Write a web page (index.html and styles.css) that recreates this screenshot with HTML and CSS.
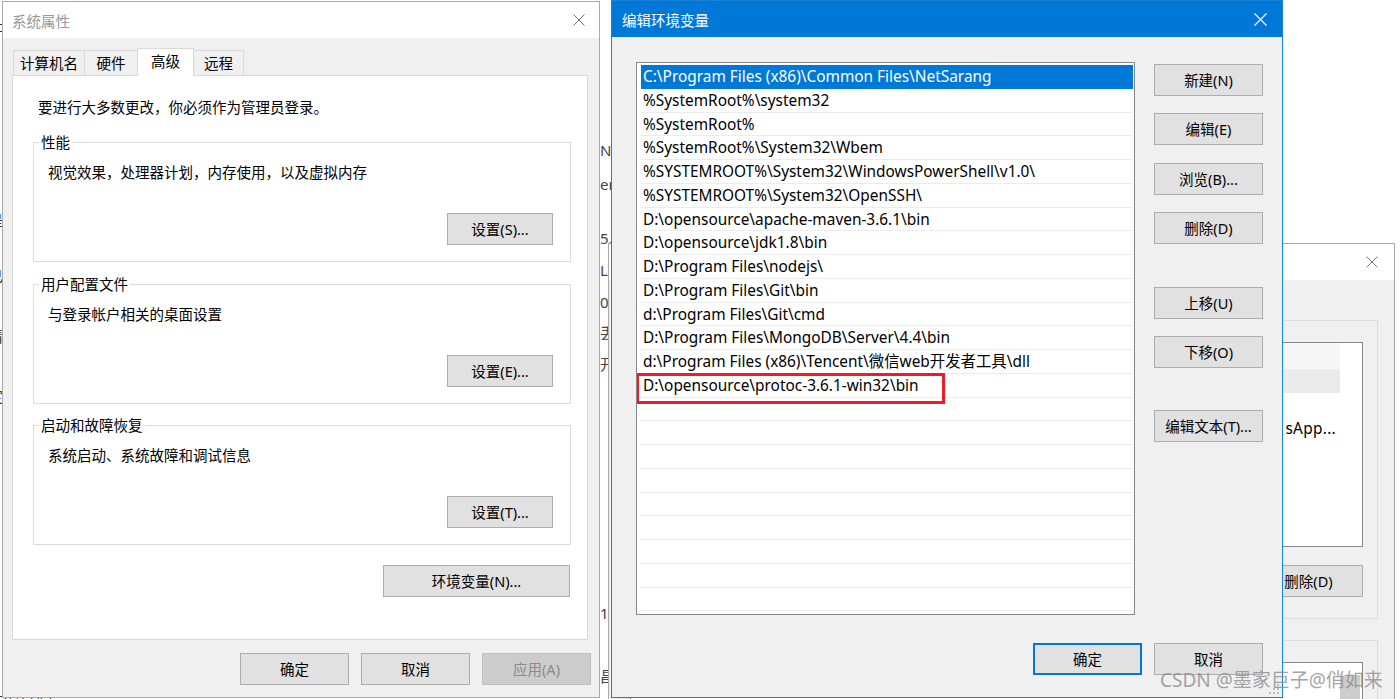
FILE: index.html
```html
<!DOCTYPE html>
<html lang="zh-CN">
<head>
<meta charset="utf-8">
<title>编辑环境变量</title>
<link rel="stylesheet" href="styles.css">
</head>
<body>
<div class="desktop">

  <div class="frag-left">
    <div class="fl fl-a">址</div>
    <div class="fl fl-b">是</div>
    <div class="fl fl-c">己</div>
    <div class="fl fl-d">请</div>
    <div class="fl fl-e">定</div>
  </div>

  <div class="frag-mid">
    <div class="fm fm-1">NMI</div>
    <div class="fm fm-2">er</div>
    <div class="fm fm-3">5.</div>
    <div class="fm fm-4">L</div>
    <div class="fm fm-5">0</div>
    <div class="fm fm-6">丢</div>
    <div class="fm fm-7">开</div>
    <div class="fm fm-8">1</div>
    <div class="fm fm-9">昌</div>
  </div>

  <div class="frag-bottom">引计列表</div>

  <!-- background window: 环境变量 -->
  <div class="win win-back">
    <div class="titlebar">
      <span class="title"></span>
      <svg class="x" width="12" height="12" viewBox="0 0 12 12"><path d="M0.5 0.5L11.5 11.5M11.5 0.5L0.5 11.5" stroke="#7a7a7a" stroke-width="1"/></svg>
    </div>
    <div class="back-body">
      <div class="back-group">
        <div class="back-list">
          <div class="bl-row bl-head"></div>
          <div class="bl-row bl-sel"></div>
          <div class="bl-row"></div>
          <div class="bl-row bl-text"><span>sApp...</span></div>
        </div>
        <div class="back-actions">
          <button class="btn">删除(D)</button>
        </div>
      </div>
      <div class="back-group back-group2">
        <div class="back-list2">
          <div class="scroll-thumb"></div>
        </div>
      </div>
    </div>
  </div>

  <!-- 系统属性 -->
  <div class="win win-sys">
    <div class="titlebar">
      <span class="title">系统属性</span>
      <svg class="x" width="12" height="12" viewBox="0 0 12 12"><path d="M0.5 0.5L11.5 11.5M11.5 0.5L0.5 11.5" stroke="#6f6f6f" stroke-width="1"/></svg>
    </div>
    <div class="sys-body">
      <div class="tabs">
        <div class="tab tab-1">计算机名</div>
        <div class="tab tab-2">硬件</div>
        <div class="tab tab-3 active">高级</div>
        <div class="tab tab-4">远程</div>
      </div>
      <div class="tabpanel">
        <p class="note">要进行大多数更改，你必须作为管理员登录。</p>
        <fieldset class="group">
          <legend>性能</legend>
          <p class="desc">视觉效果，处理器计划，内存使用，以及虚拟内存</p>
          <div class="row-end"><button class="btn btn-set">设置(S)...</button></div>
        </fieldset>
        <fieldset class="group group-2">
          <legend>用户配置文件</legend>
          <p class="desc">与登录帐户相关的桌面设置</p>
          <div class="row-end"><button class="btn btn-set">设置(E)...</button></div>
        </fieldset>
        <fieldset class="group group-3">
          <legend>启动和故障恢复</legend>
          <p class="desc">系统启动、系统故障和调试信息</p>
          <div class="row-end"><button class="btn btn-set">设置(T)...</button></div>
        </fieldset>
        <div class="row-end env-row"><button class="btn btn-env">环境变量(N)...</button></div>
      </div>
      <div class="dialog-buttons">
        <button class="btn">确定</button>
        <button class="btn">取消</button>
        <button class="btn" disabled>应用(A)</button>
      </div>
    </div>
  </div>

  <!-- 编辑环境变量 -->
  <div class="win win-env">
    <div class="titlebar">
      <span class="title">编辑环境变量</span>
      <svg class="x" width="13" height="13" viewBox="0 0 13 13"><path d="M0.5 0.5L12.5 12.5M12.5 0.5L0.5 12.5" stroke="#ffffff" stroke-width="1.2"/></svg>
    </div>
    <div class="env-body">
      <div class="env-list">
        <div class="item selected">C:\Program Files (x86)\Common Files\NetSarang</div>
        <div class="item">%SystemRoot%\system32</div>
        <div class="item">%SystemRoot%</div>
        <div class="item">%SystemRoot%\System32\Wbem</div>
        <div class="item">%SYSTEMROOT%\System32\WindowsPowerShell\v1.0\</div>
        <div class="item">%SYSTEMROOT%\System32\OpenSSH\</div>
        <div class="item">D:\opensource\apache-maven-3.6.1\bin</div>
        <div class="item">D:\opensource\jdk1.8\bin</div>
        <div class="item">D:\Program Files\nodejs\</div>
        <div class="item">D:\Program Files\Git\bin</div>
        <div class="item">d:\Program Files\Git\cmd</div>
        <div class="item">D:\Program Files\MongoDB\Server\4.4\bin</div>
        <div class="item">d:\Program Files (x86)\Tencent\微信web开发者工具\dll</div>
        <div class="item">D:\opensource\protoc-3.6.1-win32\bin</div>
        <div class="item"></div>
        <div class="item"></div>
        <div class="item"></div>
        <div class="item"></div>
        <div class="item"></div>
        <div class="item"></div>
        <div class="item"></div>
        <div class="item"></div>
        <div class="item"></div>
        <div class="item"></div>
        <div class="highlight-box"></div>
      </div>
      <div class="env-actions">
        <button class="btn">新建(N)</button>
        <button class="btn gap-17">编辑(E)</button>
        <button class="btn gap-18">浏览(B)...</button>
        <button class="btn gap-17">删除(D)</button>
        <button class="btn gap-43">上移(U)</button>
        <button class="btn gap-17">下移(O)</button>
        <button class="btn gap-42">编辑文本(T)...</button>
      </div>
      <div class="env-footer">
        <button class="btn default">确定</button>
        <button class="btn">取消</button>
      </div>
    </div>
    <svg class="grip" width="11" height="11" viewBox="0 0 11 11">
      <rect x="8" y="0" width="2" height="2" fill="#bcbcbc"/>
      <rect x="4" y="4" width="2" height="2" fill="#bcbcbc"/>
      <rect x="8" y="4" width="2" height="2" fill="#bcbcbc"/>
      <rect x="0" y="8" width="2" height="2" fill="#bcbcbc"/>
      <rect x="4" y="8" width="2" height="2" fill="#bcbcbc"/>
      <rect x="8" y="8" width="2" height="2" fill="#bcbcbc"/>
    </svg>
  </div>

  <div class="watermark">CSDN @墨家巨子@俏如来</div>
</div>
</body>
</html>
```

FILE: styles.css
```css
* { box-sizing: border-box; }
html, body { margin: 0; padding: 0; }
body {
  width: 1400px;
  height: 699px;
  overflow: hidden;
  background: #ffffff;
  font-family: "Noto Sans", "Noto Sans CJK SC", sans-serif;
  font-size: 14.5px;
  color: #000;
}
.desktop {
  position: relative;
  width: 1400px;
  height: 699px;
  overflow: hidden;
  background: #ffffff;
}
p { margin: 0; }
button { font: inherit; color: #000; }

/* ---------- generic button ---------- */
.btn {
  flex: none;
  width: 109px;
  height: 32px;
  padding: 0;
  background: #e1e1e1;
  border: 1px solid #adadad;
  border-radius: 0;
  line-height: 28px;
  text-align: center;
  white-space: nowrap;
  overflow: hidden;
}
.btn.default { border: 2px solid #0078d7; }
.btn:disabled { background: #cccccc; border-color: #bfbfbf; color: #8a8a8a; }

/* ---------- generic window ---------- */
.win {
  position: absolute;
  display: flex;
  flex-direction: column;
  background: #f0f0f0;
}
.titlebar {
  flex: none;
  display: flex;
  align-items: center;
  justify-content: space-between;
}
.titlebar .x { display: block; flex: none; }

/* ---------- background fragments ---------- */
.frag-left {
  position: absolute;
  left: -12px;
  top: 0;
  width: 16px;
  display: flex;
  flex-direction: column;
  color: #333;
  font-size: 15px;
  line-height: 20px;
  z-index: 1;
}
.fl-a { margin-top: 15px; }
.fl-b { margin-top: 175px; }
.fl-c { margin-top: 36px; }
.fl-d { margin-top: 40px; }
.fl-e { margin-top: 40px; }

.frag-mid {
  position: absolute;
  left: 600px;
  top: 140px;
  width: 30px;
  display: flex;
  flex-direction: column;
  color: #444;
  font-size: 15px;
  line-height: 20px;
  white-space: nowrap;
  z-index: 1;
}
.fm-2 { margin-top: 14px; }
.fm-3 { margin-top: 34px; }
.fm-4 { margin-top: 12px; }
.fm-5 { margin-top: 12px; }
.fm-6 { margin-top: 11px; }
.fm-7 { margin-top: 11px; }
.fm-8 { margin-top: 229px; }
.fm-9 { margin-top: 43px; }

.frag-bottom {
  position: absolute;
  left: -2px;
  top: 692px;
  font-size: 15px;
  line-height: 20px;
  color: #333;
  z-index: 1;
}

/* ---------- background window (环境变量) ---------- */
.win-back {
  left: 608px;
  top: 243px;
  width: 787px;
  height: 470px;
  border: 1px solid #a8a8a8;
  z-index: 2;
}
.win-back .titlebar {
  height: 36px;
  background: #fff;
  padding: 0 16px 0 10px;
}
.back-body {
  flex: 1;
  display: flex;
  flex-direction: column;
  padding: 0 16px 0 10px;
}
.back-group {
  flex: none;
  margin-top: 40px;
  height: 299px;
  border: 1px solid #dcdcdc;
  padding: 21px 14px 0 10px;
  display: flex;
  flex-direction: column;
}
.back-list {
  flex: none;
  height: 205px;
  background: #fff;
  border: 1px solid #828790;
  padding: 0 22px 0 0;
  display: flex;
  flex-direction: column;
  overflow: hidden;
}
.bl-row { flex: none; height: 24px; }
.bl-head { height: 26px; background: #f7f7f7; }
.bl-sel { background: #ebebeb; }
.bl-text {
  display: flex;
  justify-content: flex-end;
  white-space: nowrap;
  line-height: 24px;
  font-size: 15.4px;
  padding-right: 4px;
  letter-spacing: 0.3px;
}
.bl-text span { flex: none; }
.back-actions {
  display: flex;
  justify-content: flex-end;
  margin-top: 18px;
}
.back-group2 {
  margin-top: 21px;
  height: 120px;
}
.back-list2 {
  flex: none;
  height: 120px;
  background: #fff;
  border: 1px solid #828790;
  display: flex;
  justify-content: flex-end;
  padding: 12px 2px 0 0;
}
.scroll-thumb { width: 20px; height: 60px; background: #cdcdcd; }

/* ---------- 系统属性 ---------- */
.win-sys {
  left: 2px;
  top: 1px;
  width: 598px;
  height: 697px;
  border: 1px solid #a9a9a9;
  z-index: 3;
}
.win-sys .titlebar {
  height: 36px;
  background: #fff;
  padding: 0 14px 0 9px;
  color: #999;
}
.sys-body {
  flex: 1;
  display: flex;
  flex-direction: column;
  padding: 10px 11px 0 9px;
}
.tabs {
  flex: none;
  height: 27px;
  display: flex;
  align-items: flex-end;
  padding-left: 1px;
}
.tab {
  flex: none;
  height: 25px;
  border: 1px solid #d9d9d9;
  border-bottom: 0;
  margin-left: -1px;
  text-align: center;
  line-height: 24px;
  background: #f0f0f0;
}
.tab-1 { width: 72px; margin-left: 0; }
.tab-2 { width: 54px; }
.tab-3 { width: 57px; }
.tab-4 { width: 51px; }
.tab.active {
  height: 28px;
  margin-bottom: -1px;
  background: #fff;
  position: relative;
  z-index: 1;
  line-height: 24px;
}
.tabpanel {
  flex: none;
  height: 565px;
  background: #fff;
  border: 1px solid #d9d9d9;
  padding: 0 16px 0 20px;
  display: flex;
  flex-direction: column;
}
.note {
  margin-top: 21px;
  padding-left: 5px;
  line-height: 20px;
}
.group {
  margin: 16px 0 0 0;
  min-width: 0;
  border: 1px solid #dcdcdc;
  padding: 0 17px 16px 14px;
}
.group legend {
  margin-left: -9px;
  padding: 0 2px;
  line-height: 18px;
}
.group-2 { margin-top: 13px; }
.group-3 { margin-top: 12px; }
.desc {
  margin-top: 11px;
  line-height: 20px;
}
.row-end {
  display: flex;
  justify-content: flex-end;
  margin-top: 31px;
}
.btn-set { width: 106px; }
.env-row { margin-top: 20px; margin-right: 1px; }
.btn-env { width: 187px; }
.dialog-buttons {
  display: flex;
  justify-content: flex-end;
  gap: 12px;
  margin-top: 13px;
  margin-right: -3px;
}

/* ---------- 编辑环境变量 ---------- */
.win-env {
  left: 611px;
  top: 0;
  width: 672px;
  height: 698px;
  border: 1px solid #1883d7;
  z-index: 4;
}
.win-env .titlebar {
  height: 36px;
  background: #0078d7;
  color: #fff;
  padding: 0 15px 0 10px;
}
.env-body {
  flex: 1;
  display: grid;
  grid-template-columns: 499px 109px;
  grid-template-rows: 553px auto;
  column-gap: 19px;
  align-content: start;
  padding: 25px 19px 0 24px;
}
.env-list {
  position: relative;
  height: 553px;
  background: #fff;
  border: 1px solid #828790;
  padding: 2px 1px 0 4px;
  overflow: hidden;
  display: flex;
  flex-direction: column;
}
.item {
  flex: none;
  height: 23.75px;
  border-bottom: 1px solid #ececec;
  padding-left: 2px;
  line-height: 24.5px;
  font-size: 15.4px;
  white-space: nowrap;
  overflow: hidden;
}
.item.selected {
  background: #0078d7;
  color: #fff;
  border-bottom-color: #0078d7;
}
.highlight-box {
  position: absolute;
  left: -1px;
  top: 310px;
  width: 309px;
  height: 31px;
  border: 3px solid #ee1c25;
}
.env-actions {
  display: flex;
  flex-direction: column;
  padding-top: 2px;
}
.gap-17 { margin-top: 17px; }
.gap-18 { margin-top: 18px; }
.gap-42 { margin-top: 42px; }
.gap-43 { margin-top: 43px; }
.env-footer {
  grid-column: 1 / span 2;
  display: flex;
  justify-content: flex-end;
  gap: 12px;
  margin-top: 28px;
}
.grip {
  position: absolute;
  right: 2px;
  bottom: 2px;
}

.watermark {
  position: absolute;
  left: 1160px;
  top: 667px;
  font-size: 19px;
  line-height: 26px;
  color: rgba(140, 140, 140, 0.8);
  white-space: nowrap;
  z-index: 10;
}
```
